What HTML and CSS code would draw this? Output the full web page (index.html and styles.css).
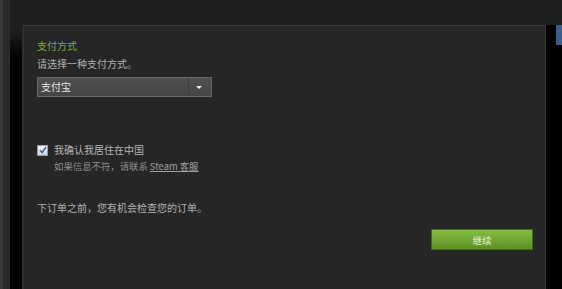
FILE: index.html
```html
<!DOCTYPE html>
<html lang="zh-CN">
<head>
  <meta charset="UTF-8">
  <title>支付方式</title>
  <link rel="stylesheet" href="styles.css">
</head>
<body>
  <div class="frame">
    <div class="gutter-left"></div>
    <div class="panel">
      <div class="section-title">支付方式</div>
      <div class="hint">请选择一种支付方式。</div>

      <div class="select">
        <span class="select-value">支付宝</span>
        <span class="select-arrow"></span>
      </div>

      <label class="confirm">
        <span class="check">
          <svg width="8" height="8" viewBox="0 0 8 8"><path d="M1 4.2 L3.2 6.5 L7 1" fill="none" stroke="#3b5fc4" stroke-width="1.5"/></svg>
        </span>
        我确认我居住在中国
      </label>
      <div class="note">如果信息不符，请联系 <a href="#">Steam 客服</a></div>

      <div class="order">下订单之前，您有机会检查您的订单。</div>

      <div class="actions">
        <button class="btn-continue">继续</button>
      </div>
    </div>
    <div class="gutter-right"><div class="tab"></div></div>
  </div>
</body>
</html>
```

FILE: styles.css
```css
body {
  margin: 0;
  background-color: #1f1f1f;
  font-family: "Noto Sans CJK SC", "Liberation Sans", sans-serif;
  font-size: 10px;
  overflow: hidden;
}
.frame {
  display: flex;
  height: 289px;
}
.gutter-left {
  width: 23px;
  border-left: 3px solid #3a3a3a;
  box-sizing: border-box;
  background: linear-gradient(to right, #2a2a2a 0, #2a2a2a 7px, #1f1f1f 7px);
}
.gutter-left::after {
  content: "";
  display: block;
  margin-left: 7px;
  margin-top: 30px;
  height: 259px;
  background: linear-gradient(#1f1f1f, #000 30px);
  border-right: 1px solid #2c2c2c;
}
.panel {
  width: 523px;
  margin-top: 25px;
  box-sizing: border-box;
  background-color: #262626;
  border-top: 1px solid #3b3b3b;
  border-left: 1px solid #333;
  border-right: 1px solid #3b3b3b;
  padding: 13px 12px 0 13px;
}
.gutter-right {
  flex: 1;
  background: linear-gradient(#1f1f1f 0, #1f1f1f 25px, #000 25px);
}
.tab {
  margin: 25px 0 0 10px;
  height: 20px;
  background-color: #3b5f8c;
}
.section-title {
  color: #79b23a;
  line-height: 14px;
}
.hint {
  color: #b0b0b0;
  line-height: 14px;
  margin-top: 4px;
}
.select {
  display: flex;
  width: 175px;
  height: 20px;
  margin-top: 6px;
  box-sizing: border-box;
  border: 1px solid #686868;
  background: linear-gradient(#505050, #454545);
}
.select-value {
  flex: 1;
  color: #e6e6e6;
  line-height: 18px;
  padding-left: 3px;
}
.select-arrow {
  width: 22px;
  border-left: 1px solid #3c3c3c;
  position: relative;
}
.select-arrow::after {
  content: "";
  position: absolute;
  left: 7px;
  top: 8px;
  border-left: 3px solid transparent;
  border-right: 3px solid transparent;
  border-top: 3px solid #f0f0f0;
}
.confirm {
  display: flex;
  align-items: center;
  gap: 6px;
  margin-top: 46px;
  color: #b4b4b4;
  line-height: 14px;
}
.check {
  width: 11px;
  height: 11px;
  box-sizing: border-box;
  border: 1px solid #9a9a9a;
  background: linear-gradient(#f4f4f4, #d4d4d4);
  display: flex;
  align-items: center;
  justify-content: center;
}
.note {
  margin: 3px 0 0 17px;
  font-size: 9.4px;
  line-height: 12px;
  color: #8c8c8c;
}
.note a {
  color: #a0a0a0;
  text-decoration: underline;
}
.order {
  margin-top: 29px;
  color: #b0b0b0;
  line-height: 14px;
}
.actions {
  display: flex;
  justify-content: flex-end;
  margin-top: 14px;
}
.btn-continue {
  width: 102px;
  height: 21px;
  border: 1px solid #3f6a1a;
  background: linear-gradient(#86bf3f, #5b8f26);
  color: #e4f3d2;
  font-family: inherit;
  font-size: 9.5px;
  padding: 0;
}
```
